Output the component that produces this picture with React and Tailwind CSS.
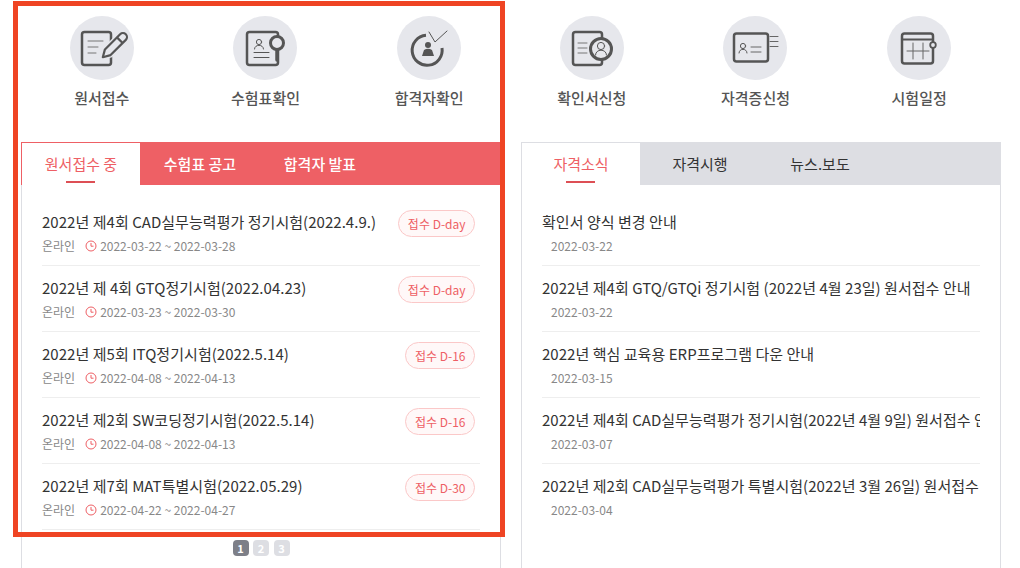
const KR = "font-['Noto_Sans_CJK_KR','Noto_Sans',sans-serif]";

const Ic = ({ children }) => (
  <svg width="64" height="64" viewBox="0 0 64 64" fill="none" stroke="#555" strokeWidth="2.5" strokeLinecap="round" strokeLinejoin="round">
    {children}
  </svg>
);

const ApplyIcon = () => (
  <Ic>
    <rect x="12" y="16" width="29" height="33" rx="2.5" />
    <path d="M18 25h15M18 31h10M18 37h8" strokeWidth="1" stroke="#777" />
    <g transform="rotate(45 42 32)">
      <path d="M38 16h8v22l-4 7-4-7z" fill="#e6e7ec" stroke="#e6e7ec" strokeWidth="5" />
      <path d="M38 16.5a4 4 0 0 1 8 0v21.5l-4 7-4-7zM38 21h8" fill="#e6e7ec" strokeWidth="2.2" />
    </g>
  </Ic>
);

const TicketIcon = () => (
  <Ic>
    <rect x="14" y="16" width="31" height="33" rx="2.5" />
    <circle cx="26" cy="26" r="2.6" strokeWidth="1" />
    <path d="M21.5 33c0-5 9-5 9 0M21 36.5h15M21 41.5h15" strokeWidth="1" />
    <path d="M44 33v11" strokeWidth="3.5" />
    <circle cx="44" cy="27" r="6.5" fill="#e6e7ec" strokeWidth="3" />
  </Ic>
);

const PassIcon = () => (
  <Ic>
    <path d="M29 19.3A15 15 0 1 0 45 32" strokeWidth="3" strokeLinecap="butt" />
    <path d="M32 16l6 10 12-11" strokeWidth="1" />
    <circle cx="31" cy="29" r="3" fill="#555" stroke="none" />
    <path d="M25 40l2-6q4-2.500 8 0l2 6z" fill="#555" stroke="none" />
  </Ic>
);

const ConfirmIcon = () => (
  <Ic>
    <rect x="13" y="16" width="29" height="33" rx="2.5" />
    <path d="M18 27h9M18 32h9M18 37h9" strokeWidth="1" stroke="#777" />
    <circle cx="41" cy="33" r="10.5" fill="#e6e7ec" strokeWidth="3" />
    <circle cx="41" cy="30" r="3.6" strokeWidth="1" />
    <path d="M35.5 39c0-6.500 11-6.500 11 0" strokeWidth="1" />
  </Ic>
);

const CertIcon = () => (
  <Ic>
    <rect x="11" y="17.500" width="34" height="28" rx="2.5" />
    <circle cx="20" cy="30" r="2.6" strokeWidth="1" />
    <path d="M16 37c0-5 8-5 8 0" strokeWidth="1" />
    <path d="M28 31h10M28 36h10M47 20.500h8M47 25.500h8M47 30.500h8" strokeWidth="1" stroke="#666" />
  </Ic>
);

const CalendarIcon = () => (
  <Ic>
    <rect x="15" y="17.500" width="31" height="30" rx="2.5" />
    <path d="M15 23.500h31" strokeWidth="2" />
    <path d="M20 35h22M26 27v16M36 27v16" strokeWidth="1" stroke="#666" />
    <circle cx="46" cy="29" r="2.800" fill="#e6e7ec" strokeWidth="1.800" />
  </Ic>
);

const ClockMark = () => (
  <svg width="12" height="12" viewBox="0 0 12 12" fill="none" stroke="#ee5f65" strokeWidth="1" className="shrink-0 -ml-px">
    <circle cx="6" cy="6" r="5" />
    <path d="M6 3v3.200h2.500" />
  </svg>
);

const leftMenu = [
  { label: "원서접수", icon: <ApplyIcon /> },
  { label: "수험표확인", icon: <TicketIcon /> },
  { label: "합격자확인", icon: <PassIcon /> },
];

const rightMenu = [
  { label: "확인서신청", icon: <ConfirmIcon /> },
  { label: "자격증신청", icon: <CertIcon /> },
  { label: "시험일정", icon: <CalendarIcon /> },
];

const exams = [
  { title: "2022년 제4회 CAD실무능력평가 정기시험(2022.4.9.)", date: "2022-03-22 ~ 2022-03-28", badge: "접수 D-day" },
  { title: "2022년 제 4회 GTQ정기시험(2022.04.23)", date: "2022-03-23 ~ 2022-03-30", badge: "접수 D-day" },
  { title: "2022년 제5회 ITQ정기시험(2022.5.14)", date: "2022-04-08 ~ 2022-04-13", badge: "접수 D-16" },
  { title: "2022년 제2회 SW코딩정기시험(2022.5.14)", date: "2022-04-08 ~ 2022-04-13", badge: "접수 D-16" },
  { title: "2022년 제7회 MAT특별시험(2022.05.29)", date: "2022-04-22 ~ 2022-04-27", badge: "접수 D-30" },
];

const notices = [
  { title: "확인서 양식 변경 안내", date: "2022-03-22" },
  { title: "2022년 제4회 GTQ/GTQi 정기시험 (2022년 4월 23일) 원서접수 안내", date: "2022-03-22" },
  { title: "2022년 핵심 교육용 ERP프로그램 다운 안내", date: "2022-03-15" },
  { title: "2022년 제4회 CAD실무능력평가 정기시험(2022년 4월 9일) 원서접수 안내", date: "2022-03-07" },
  { title: "2022년 제2회 CAD실무능력평가 특별시험(2022년 3월 26일) 원서접수 안내", date: "2022-03-04" },
];

const MenuRow = ({ items, className }) => (
  <div className={`grid grid-cols-3 w-[491px] h-[142px] pt-4 ${className}`}>
    {items.map((m) => (
      <div key={m.label} className="flex flex-col items-center">
        <div className="w-16 h-16 rounded-full bg-[#e6e7ec]">{m.icon}</div>
        <span className="mt-2 text-[15px] leading-5 font-medium text-[#555]">{m.label}</span>
      </div>
    ))}
  </div>
);

const Tabs = ({ labels, bar, border, text }) => (
  <div className={`flex h-[43px] -mx-px ${bar}`}>
    {labels.map((label, i) =>
      i === 0 ? (
        <div key={label} className={`relative w-[119px] flex items-center justify-center pt-px bg-white border-t border-l ${border} text-[15px] text-[#ee5f65]`}>
          {label}
          <span className="absolute bottom-0.5 left-[44px] w-[29px] h-0.5 bg-[#dd4f55]" />
        </div>
      ) : (
        <div key={label} className={`w-[120px] flex items-center justify-center pt-px text-[15px] ${text}`}>
          {label}
        </div>
      )
    )}
  </div>
);

export default function App() {
  return (
    <div className={`relative w-[1020px] h-[568px] overflow-hidden bg-white flex gap-5 pl-[21px] ${KR}`}>
      {/* left column */}
      <div className="w-[480px] shrink-0">
        <MenuRow items={leftMenu} className="-ml-px" />
        <div className="h-[426px] border-x border-[#dddee3]">
          <Tabs labels={["원서접수 중", "수험표 공고", "합격자 발표"]} bar="bg-[#ee6065]" border="border-[#ee6065]" text="text-white font-medium" />
          <ul className="mx-5 pt-[15px]">
            {exams.map((e) => (
              <li key={e.title} className="h-[66px] flex justify-between border-b border-[#eeeeee]">
                <div className="pt-[11px]">
                  <p className="text-[15px] leading-[22px] tracking-[0.04px] text-[#333]">{e.title}</p>
                  <p className="mt-[3px] flex items-center text-xs leading-5 text-[#888]">
                    <span className="mr-[11px]">온라인</span>
                    <ClockMark />
                    <span className="ml-[3px]">{e.date}</span>
                  </p>
                </div>
                <span className="mt-2.5 mr-[5px] h-[27px] px-[8.5px] flex items-center rounded-full border border-[#fbc8c8] bg-[#fff8f8] text-xs text-[#ee5f65]">
                  {e.badge}
                </span>
              </li>
            ))}
          </ul>
          <div className="mt-2.5 flex justify-center gap-[4.5px]">
            {[1, 2, 3].map((n) => (
              <span
                key={n}
                className={`w-4 h-4 rounded-sm flex items-center justify-center text-[11px] font-bold text-white ${n === 1 ? "bg-[#7d7f88]" : "bg-[#dddee3]"}`}
              >
                {n}
              </span>
            ))}
          </div>
        </div>
      </div>

      {/* right column */}
      <div className="w-[480px] shrink-0">
        <MenuRow items={rightMenu} className="-ml-[11px]" />
        <div className="h-[426px] border-x border-[#dddee3]">
          <Tabs labels={["자격소식", "자격시행", "뉴스.보도"]} bar="bg-[#dddee3]" border="border-[#dddee3]" text="text-[#333]" />
          <ul className="mx-5 pt-[15px]">
            {notices.map((n) => (
              <li key={n.title} className="h-[66px] border-b border-[#eeeeee] last:border-b-0 pt-[11px]">
                <p className="text-[15px] leading-[22px] tracking-[0.04px] text-[#333] whitespace-nowrap overflow-hidden">{n.title}</p>
                <p className="mt-[3px] pl-[9px] text-xs leading-5 text-[#888]">{n.date}</p>
              </li>
            ))}
          </ul>
        </div>
      </div>

      {/* red highlight box */}
      <div className="absolute left-[13px] top-px w-[492px] h-[536px] border-[5px] border-[#ef4423] pointer-events-none" />
    </div>
  );
}
